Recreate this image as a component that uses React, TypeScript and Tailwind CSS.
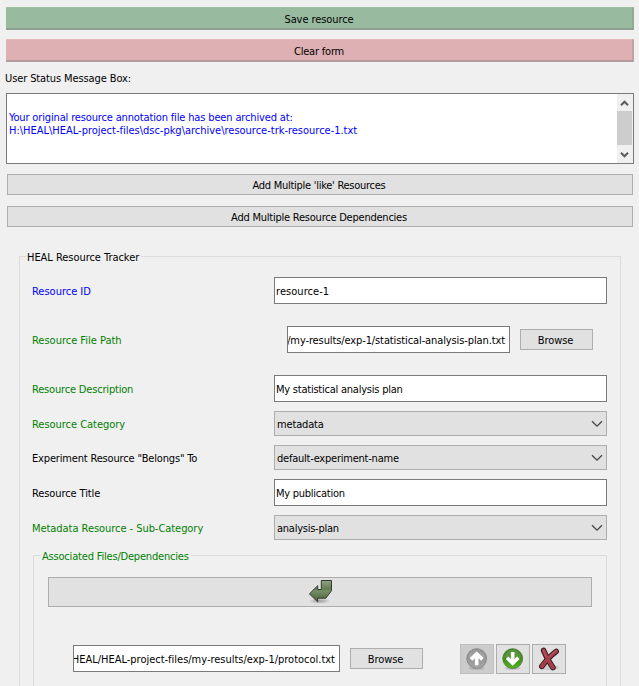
import type { ReactNode } from "react";

function PushButton({ label, className }: { label: ReactNode; className: string }) {
  return (
    <button className={`flex h-[21px] shrink-0 items-center justify-center border border-[#adadad] bg-[#e1e1e1] pt-[2px] pr-[2px] whitespace-nowrap ${className}`}>
      {label}
    </button>
  );
}

function TextField({ value, className }: { value: string; className: string }) {
  return (
    <div className={`flex h-[27px] shrink-0 items-center overflow-hidden border border-[#7a7a7a] bg-white pl-[1px] whitespace-nowrap ${className}`}>
      <span className="pt-[2px]">{value}</span>
    </div>
  );
}

function Combo({ value, className }: { value: string; className: string }) {
  return (
    <div className={`flex h-[25px] w-[333px] items-center justify-between border border-[#adadad] bg-[#e1e1e1] pr-[3px] pl-[2px] whitespace-nowrap ${className}`}>
      <span className="pt-[2px]">{value}</span>
      <svg width="12" height="8" viewBox="0 0 12 8" fill="none" stroke="#444" strokeWidth="1.3">
        <path d="M1 1.2 6 6.2 11 1.2" />
      </svg>
    </div>
  );
}

function FormRow({ label, className, children }: { label: string; className: string; children: ReactNode }) {
  return (
    <div className={`flex items-center whitespace-nowrap ${className}`}>
      <span className="w-[242px] shrink-0 pt-[2px]">{label}</span>
      <div className="flex items-center tracking-normal text-black">{children}</div>
    </div>
  );
}

function ScrollChevron({ down }: { down?: boolean }) {
  return (
    <svg width="15" height="17" viewBox="0 0 15 17" fill="none" stroke="#5c5c5c" strokeWidth="2">
      <path d={down ? "M4 7.8 7.5 11.3 11 7.8" : "M4 11.2 7.5 7.7 11 11.2"} />
    </svg>
  );
}

function ReturnArrow() {
  return (
    <svg width="26" height="26" viewBox="0 0 26 26">
      <defs>
        <linearGradient id="moss" x1="0" y1="0" x2="0" y2="1">
          <stop offset="0" stopColor="#94a383" />
          <stop offset="0.4" stopColor="#627a53" />
          <stop offset="0.5" stopColor="#768f65" />
          <stop offset="1" stopColor="#465c3e" />
        </linearGradient>
        <radialGradient id="floor">
          <stop offset="0" stopColor="#000" stopOpacity="0.3" />
          <stop offset="1" stopColor="#000" stopOpacity="0" />
        </radialGradient>
      </defs>
      <ellipse cx="12.5" cy="22" rx="11" ry="3" fill="url(#floor)" />
      <path d="M14.3 1.5H24.5V11.8L18.8 19.2H10.7V22.8L2.4 14.9 10.7 6.7V10.5H14.3Z" fill="url(#moss)" stroke="#343c30" strokeWidth="1" strokeLinejoin="round" />
    </svg>
  );
}

function CircleArrow({ down }: { down?: boolean }) {
  return (
    <svg width="24" height="24" viewBox="0 0 24 24">
      <defs>
        <linearGradient id="grayBall" x1="0" y1="0" x2="0" y2="1">
          <stop offset="0" stopColor="#8a8a8a" />
          <stop offset="1" stopColor="#a5a5a5" />
        </linearGradient>
        <linearGradient id="greenBall" x1="0" y1="0" x2="0" y2="1">
          <stop offset="0" stopColor="#3c7f1c" />
          <stop offset="0.5" stopColor="#3f8c1d" />
          <stop offset="1" stopColor="#58b425" />
        </linearGradient>
      </defs>
      <ellipse cx="11.7" cy="21.2" rx="8" ry="1.8" fill="#000" opacity="0.12" />
      <circle cx="11.7" cy="11.6" r="9.9" fill={down ? "url(#greenBall)" : "url(#grayBall)"} stroke={down ? "#4b7d38" : "#858585"} strokeWidth="0.9" />
      <path d="M3 10A8.8 8.8 0 0 1 20.4 10Q12 14 3 10Z" fill="#fff" opacity="0.13" />
      <path
        d="M11.7 6.5V18.2M6 12.4 11.7 6.9 17.4 12.4"
        fill="none"
        stroke="#fff"
        strokeWidth="3.6"
        transform={down ? "rotate(180 11.7 11.6)" : undefined}
      />
    </svg>
  );
}

function RedCross() {
  return (
    <svg width="24" height="24" viewBox="0 0 24 24" fill="none" strokeLinecap="round">
      <ellipse cx="12" cy="20.6" rx="10" ry="2.6" fill="#000" opacity="0.1" />
      <path d="M6.6 3.4Q10 12.5 16 20.6M19.2 4.4Q11.5 10 4.8 19.4" stroke="#3a1d20" strokeWidth="5.6" />
      <path d="M6.6 3.4Q10 12.5 16 20.6M19.2 4.4Q11.5 10 4.8 19.4" stroke="#a63f4b" strokeWidth="3.6" />
      <path d="M6.4 3.4Q7.8 7.4 9.4 10M18.6 4.2Q14.5 7 12.6 9.3" stroke="#bb5963" strokeWidth="1" />
    </svg>
  );
}

function IconButton({ disabled, children }: { disabled?: boolean; children: ReactNode }) {
  return (
    <button className={`flex h-[30px] w-[34px] items-center justify-center border ${disabled ? "border-[#bfbfbf] bg-[#cccccc]" : "border-[#adadad] bg-[#e1e1e1]"}`}>
      {children}
    </button>
  );
}

export default function App() {
  return (
    <div className="flex h-[686px] w-[639px] flex-col overflow-hidden bg-[#f0f0f0] pt-[7px] font-['DejaVu_Sans_Condensed','DejaVu_Sans',sans-serif] text-[11px] leading-[13px] text-black">
      <button className="ml-[6px] flex h-[23px] w-[628px] shrink-0 items-center justify-center border-t border-r-2 border-b-2 border-t-[#9dc3a6] border-r-[#92ab98] border-b-[#8f9f93] bg-[#98bba0] pt-[2px] tracking-[-0.08px]">
        Save resource
      </button>
      <button className="mt-[9px] ml-[6px] flex h-[23px] w-[628px] shrink-0 items-center justify-center border-t border-r-2 border-b-2 border-t-[#e8b9bb] border-r-[#bfa1a4] border-b-[#b19b9d] bg-[#dfb0b3] pt-[2px] tracking-[-0.2px]">
        Clear form
      </button>
      <div className="mt-[10px] ml-[5px] h-[21px] shrink-0 tracking-[-0.11px]">User Status Message Box:</div>

      <div className="ml-[6px] flex h-[71px] w-[628px] shrink-0 border border-[#7a7a7a] bg-white">
        <div className="flex grow flex-col pt-[17px] pl-[2px] whitespace-nowrap text-[#0000ff]">
          <span className="tracking-[-0.15px]">Your original resource annotation file has been archived at:</span>
          <span className="tracking-[-0.01px]">H:\HEAL\HEAL-project-files\dsc-pkg\archive\resource-trk-resource-1.txt</span>
        </div>
        <div className="flex w-[16px] flex-col bg-[#f0f0f0]">
          <ScrollChevron />
          <div className="h-[34px] w-[15px] bg-[#cdcdcd]" />
          <ScrollChevron down />
        </div>
      </div>

      <PushButton className="mt-[10px] ml-[7px] w-[626px] tracking-[-0.27px]" label="Add Multiple 'like' Resources" />
      <PushButton className="mt-[11px] ml-[7px] w-[626px] tracking-[-0.23px]" label="Add Multiple Resource Dependencies" />

      <fieldset className="mt-[23px] ml-[19px] h-[460px] w-[602px] shrink-0 border border-[#dcdcdc] pl-[12px]">
        <legend className="-ml-[6px] h-[13px] pr-[2px] pl-px leading-[15px] tracking-[-0.04px]">HEAL Resource Tracker</legend>
        <div className="flex flex-col pt-[14px]">
          <FormRow label="Resource ID" className="h-[27px] tracking-[-0.01px] text-[#0000ff]">
            <TextField className="w-[333px] tracking-[0.06px]" value="resource-1" />
          </FormRow>
          <FormRow label="Resource File Path" className="mt-[22px] h-[27px] tracking-[-0.01px] text-[#008000]">
            <TextField className="ml-[13px] w-[223px] justify-end pr-[4px] tracking-[-0.11px]" value="/my-results/exp-1/statistical-analysis-plan.txt" />
            <PushButton className="ml-[10px] w-[73px] tracking-[-0.1px]" label="Browse" />
          </FormRow>
          <FormRow label="Resource Description" className="mt-[22px] h-[27px] tracking-[-0.18px] text-[#008000]">
            <TextField className="w-[333px] tracking-[-0.23px]" value="My statistical analysis plan" />
          </FormRow>
          <FormRow label="Resource Category" className="mt-[9px] h-[25px] tracking-[-0.03px] text-[#008000]">
            <Combo className="tracking-[-0.15px]" value="metadata" />
          </FormRow>
          <FormRow label={'Experiment Resource "Belongs" To'} className="mt-[9px] h-[25px] tracking-[-0.17px]">
            <Combo className="tracking-[-0.22px]" value="default-experiment-name" />
          </FormRow>
          <FormRow label="Resource Title" className="mt-[9px] h-[27px] tracking-[-0.1px]">
            <TextField className="w-[333px] tracking-[-0.26px]" value="My publication" />
          </FormRow>
          <FormRow label="Metadata Resource - Sub-Category" className="mt-[9px] h-[25px] tracking-[-0.05px] text-[#008000]">
            <Combo className="tracking-[-0.25px]" value="analysis-plan" />
          </FormRow>

          <fieldset className="mt-[9px] ml-px h-[160px] w-[574px] shrink-0 border border-[#dcdcdc] pl-[14px]">
            <legend className="-ml-[7px] h-[13px] pr-[2px] pl-px leading-[15px] tracking-[-0.19px] text-[#008000]">Associated Files/Dependencies</legend>
            <div className="flex flex-col pt-[15px]">
              <button className="flex h-[30px] w-[544px] items-center justify-center border border-[#adadad] bg-[#e1e1e1]">
                <ReturnArrow />
              </button>
              <div className="mt-[37px] flex h-[30px] items-start pl-[25px]">
                <TextField className="mt-px w-[267px] justify-end pr-[4px] tracking-[-0.01px]" value="HEAL/HEAL-project-files/my-results/exp-1/protocol.txt" />
                <PushButton className="mt-[4px] ml-[10px] w-[73px] tracking-[-0.1px]" label="Browse" />
                <div className="ml-[37px] flex gap-[2px]">
                  <IconButton disabled>
                    <CircleArrow />
                  </IconButton>
                  <IconButton>
                    <CircleArrow down />
                  </IconButton>
                  <IconButton>
                    <RedCross />
                  </IconButton>
                </div>
              </div>
            </div>
          </fieldset>
        </div>
      </fieldset>
    </div>
  );
}
